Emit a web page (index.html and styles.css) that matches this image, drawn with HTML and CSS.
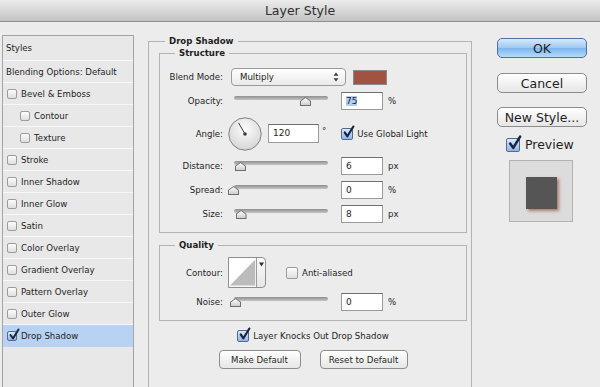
FILE: index.html
```html
<!DOCTYPE html>
<html lang="en">
<head>
    <meta charset="UTF-8">
    <title>Layer Style</title>
    <link rel="stylesheet" href="styles.css">
</head>
<body>
    <div class="titlebar">Layer Style</div>
    <div class="dialog">
        <ul class="styles-list">
            <li class="list-head list-top">Styles</li>
            <li class="list-head">Blending Options: Default</li>
            <li><span class="cb"></span>Bevel &amp; Emboss</li>
            <li class="sub"><span class="cb"></span>Contour</li>
            <li class="sub"><span class="cb"></span>Texture</li>
            <li><span class="cb"></span>Stroke</li>
            <li><span class="cb"></span>Inner Shadow</li>
            <li><span class="cb"></span>Inner Glow</li>
            <li><span class="cb"></span>Satin</li>
            <li><span class="cb"></span>Color Overlay</li>
            <li><span class="cb"></span>Gradient Overlay</li>
            <li><span class="cb"></span>Pattern Overlay</li>
            <li><span class="cb"></span>Outer Glow</li>
            <li class="selected">
                <span class="cb on"><svg viewBox="0 0 12 12"><path d="M2.5 6 L5 9.5 L10.5 0.5"/></svg></span>Drop Shadow
            </li>
        </ul>

        <fieldset class="group group-main">
            <legend>Drop Shadow</legend>

            <fieldset class="group structure">
                <legend>Structure</legend>
                <div class="field">
                    <span class="field-label">Blend Mode:</span>
                    <div class="select">
                        <span>Multiply</span>
                        <svg class="updown" width="6" height="10" viewBox="0 0 6 10"><path d="M3 0.5 L5.5 3.8 H0.5 Z M3 9.5 L5.5 6.2 H0.5 Z"/></svg>
                    </div>
                    <span class="swatch"></span>
                </div>
                <div class="field">
                    <span class="field-label">Opacity:</span>
                    <div class="slider"><span class="track"></span><span class="thumb" style="left: 66px"></span></div>
                    <span class="num"><span class="sel">75</span></span>
                    <span class="unit">%</span>
                </div>
                <div class="field field-angle">
                    <span class="field-label">Angle:</span>
                    <svg class="dial" width="34" height="34" viewBox="0 0 34 34">
                        <defs>
                            <radialGradient id="dialFill" cx="50%" cy="35%" r="65%">
                                <stop offset="0" stop-color="#fbfbfb"/>
                                <stop offset="1" stop-color="#d6d6d6"/>
                            </radialGradient>
                        </defs>
                        <circle cx="17" cy="17" r="16.2" fill="url(#dialFill)" stroke="#808080"/>
                        <line x1="17" y1="17" x2="10.5" y2="5.8" stroke="#3a3a3a" stroke-width="1"/>
                        <circle cx="17" cy="17" r="1.8" fill="#3a3a3a"/>
                    </svg>
                    <span class="num num-wide">120</span>
                    <span class="unit deg">°</span>
                    <span class="cb cb-md on"><svg viewBox="0 0 12 12"><path d="M2.5 6 L5 9.5 L10.5 0.5"/></svg></span>
                    <span class="cb-text">Use Global Light</span>
                </div>
                <div class="field">
                    <span class="field-label">Distance:</span>
                    <div class="slider"><span class="track"></span><span class="thumb" style="left: 1px"></span></div>
                    <span class="num">6</span>
                    <span class="unit">px</span>
                </div>
                <div class="field">
                    <span class="field-label">Spread:</span>
                    <div class="slider"><span class="track"></span><span class="thumb" style="left: -6px"></span></div>
                    <span class="num">0</span>
                    <span class="unit">%</span>
                </div>
                <div class="field">
                    <span class="field-label">Size:</span>
                    <div class="slider"><span class="track"></span><span class="thumb" style="left: 1.5px"></span></div>
                    <span class="num">8</span>
                    <span class="unit">px</span>
                </div>
            </fieldset>

            <fieldset class="group quality">
                <legend>Quality</legend>
                <div class="field field-contour">
                    <span class="field-label">Contour:</span>
                    <div class="contour">
                        <svg width="28" height="29" viewBox="0 0 28 29"><rect width="28" height="29" fill="#fff"/><polygon points="1,28 27,1 27,28" fill="#bcbcbc"/></svg>
                        <span class="contour-arrow"><svg width="5" height="5" viewBox="0 0 5 5"><path d="M0 0.5 H5 L2.5 4.5 Z"/></svg></span>
                    </div>
                    <span class="cb cb-md antialias"></span>
                    <span class="cb-text">Anti-aliased</span>
                </div>
                <div class="field">
                    <span class="field-label">Noise:</span>
                    <div class="slider"><span class="track"></span><span class="thumb" style="left: -4px"></span></div>
                    <span class="num">0</span>
                    <span class="unit">%</span>
                </div>
            </fieldset>

            <div class="knockout">
                <span class="cb cb-md on"><svg viewBox="0 0 12 12"><path d="M2.5 6 L5 9.5 L10.5 0.5"/></svg></span>
                <span class="cb-text">Layer Knocks Out Drop Shadow</span>
            </div>
            <div class="defaults">
                <button class="btn btn-small btn-make">Make Default</button>
                <button class="btn btn-small btn-reset">Reset to Default</button>
            </div>
        </fieldset>

        <div class="actions">
            <button class="btn btn-big btn-ok">OK</button>
            <button class="btn btn-big btn-cancel">Cancel</button>
            <button class="btn btn-big btn-new">New Style...</button>
            <div class="preview-toggle">
                <span class="cb cb-lg on"><svg viewBox="0 0 12 12"><path d="M2.5 6 L5 9.5 L10.5 0.5"/></svg></span>
                <span>Preview</span>
            </div>
            <div class="preview-box"><span class="preview-square"></span></div>
        </div>
    </div>
</body>
</html>
```

FILE: styles.css
```css
* {
    box-sizing: border-box;
}
body {
    margin: 0;
    width: 600px;
    height: 387px;
    overflow: hidden;
    background-color: #ececec;
    font-family: "DejaVu Sans", "Liberation Sans", sans-serif;
    font-size: 8.6px;
    color: #1e1e1e;
}
.titlebar {
    height: 22px;
    border-bottom: 1px solid #8e8e8e;
    background: linear-gradient(#ececec, #c3c3c3);
    text-align: center;
    font-size: 12.5px;
    line-height: 22px;
    color: #303030;
}
.dialog {
    display: flex;
    height: 365px;
    padding: 13px 0 0 2px;
}

/* left list */
.styles-list {
    list-style: none;
    margin: 0;
    padding: 0;
    width: 132px;
    flex: none;
    border: 1px solid #a4a4a4;
    border-bottom: none;
    background-color: #e8e8e8;
}
.styles-list li {
    height: 22px;
    display: flex;
    align-items: center;
    gap: 4px;
    padding-left: 4px;
    border-bottom: 1px solid #f7f7f7;
    white-space: nowrap;
}
.styles-list .list-head {
    padding-left: 3px;
}
.styles-list .list-top {
    height: 25px;
}
.styles-list .sub {
    padding-left: 17px;
}
.styles-list .selected {
    background-color: #b8d2f3;
    border-bottom: none;
}

/* checkboxes */
.cb {
    position: relative;
    flex: none;
    width: 10px;
    height: 10px;
    border: 1px solid #9c9c9c;
    border-radius: 2px;
    background: linear-gradient(#fdfdfd, #dedede);
}
.cb.on {
    border-color: #56698a;
    background: linear-gradient(#dceafb, #8fb6e6);
}
.cb svg {
    position: absolute;
    left: 0;
    top: -3px;
    width: 12px;
    height: 12px;
    overflow: visible;
}
.cb svg path {
    fill: none;
    stroke: #1a2344;
    stroke-width: 2;
    stroke-linecap: round;
    stroke-linejoin: round;
}
.cb-md {
    width: 12px;
    height: 12px;
}
.cb-md svg {
    width: 13px;
    height: 13px;
}
.cb-lg {
    width: 14px;
    height: 14px;
}
.cb-lg svg {
    width: 15px;
    height: 15px;
}
.cb-text {
    margin-left: 4px;
    white-space: nowrap;
}

/* group boxes */
.group {
    margin: 0;
    padding: 0;
    min-width: 0;
    border: 1px solid #b3b3b3;
}
.group legend {
    padding: 0 4px;
    margin-left: 15px;
    font-weight: bold;
    line-height: 12px;
}
.group-main {
    width: 324px;
    flex: none;
    margin-left: 14px;
    padding: 0 4px 0 10px;
    border-bottom: none;
}
.group-main > legend {
    margin-left: 6px;
}
.structure {
    display: flex;
    flex-direction: column;
    gap: 6px;
    padding: 9px 0 9px;
}
.quality {
    display: flex;
    flex-direction: column;
    gap: 5px;
    margin-top: 6px;
    padding: 6px 0 9px;
}

/* rows */
.field {
    display: flex;
    align-items: center;
    height: 18px;
}
.field-angle {
    height: 35px;
}
.field-contour {
    height: 31px;
}
.field-label {
    width: 63px;
    flex: none;
    text-align: right;
}
.select {
    display: flex;
    align-items: center;
    justify-content: space-between;
    width: 115px;
    height: 18px;
    margin-left: 8px;
    padding: 0 6px 0 8px;
    border: 1px solid #9b9b9b;
    border-radius: 4px;
    background: linear-gradient(#ffffff, #e9e9e9);
}
.updown path {
    fill: #3c3c3c;
}
.swatch {
    width: 34px;
    height: 15px;
    margin-left: 7px;
    border: 1px solid #8a8a8a;
    background-color: #a25241;
}
.slider {
    position: relative;
    width: 94px;
    height: 18px;
    margin-left: 11px;
    flex: none;
}
.track {
    position: absolute;
    left: 0;
    right: 0;
    top: 4px;
    height: 4px;
    border-radius: 2px;
    background: linear-gradient(#8f8f8f, #c4c4c4);
}
.thumb {
    position: absolute;
    top: 5px;
    width: 11px;
    height: 9px;
    background: #6e6e6e;
    clip-path: polygon(50% 0, 100% 45%, 100% 100%, 0 100%, 0 45%);
}
.thumb::after {
    content: "";
    position: absolute;
    inset: 1px;
    background: linear-gradient(#fdfdfd, #cfcfcf);
    clip-path: polygon(50% 0, 100% 45%, 100% 100%, 0 100%, 0 45%);
}
.num {
    width: 42px;
    height: 18px;
    margin-left: 13px;
    padding-left: 4px;
    line-height: 16px;
    border: 1px solid #9a9a9a;
    border-top-color: #6f6f6f;
    background-color: #fff;
    font-size: 9px;
}
.num .sel {
    background-color: #b3cdf1;
}
.unit {
    margin-left: 5px;
}
.dial {
    margin-left: 5px;
    flex: none;
}
.num-wide {
    width: 51px;
    height: 19px;
    margin-left: 6px;
}
.deg {
    margin-left: 3px;
    margin-right: 15px;
    align-self: flex-start;
    margin-top: 10px;
}
.contour {
    display: flex;
    height: 31px;
    width: 38px;
    margin-left: 5px;
    border: 1px solid #8f8f8f;
    border-radius: 0 4px 4px 0;
    background: linear-gradient(#fbfbfb, #e6e6e6);
}
.contour svg {
    display: block;
}
.contour-arrow {
    width: 9px;
    border-left: 1px solid #9c9c9c;
    display: flex;
    justify-content: center;
    padding-top: 4px;
}
.contour-arrow path {
    fill: #333;
}
.antialias {
    margin-left: 20px;
}

/* bottom of group */
.knockout {
    display: flex;
    align-items: center;
    justify-content: center;
    height: 12px;
    margin-top: 9px;
}
.defaults {
    display: flex;
    justify-content: center;
    gap: 19px;
    margin-top: 8px;
}
.btn {
    font-family: inherit;
    color: #1e1e1e;
    border: 1px solid #8c8c8c;
    border-radius: 4px;
    background: linear-gradient(#ffffff, #e6e6e6);
    padding: 0;
}
.btn-small {
    height: 19px;
    font-size: 8.6px;
}
.btn-make {
    width: 82px;
}
.btn-reset {
    width: 88px;
}

/* right column */
.actions {
    display: flex;
    flex-direction: column;
    width: 90px;
    flex: none;
    margin-left: 25px;
    padding-top: 3px;
}
.btn-big {
    height: 20px;
    font-size: 12.5px;
    border-radius: 5px;
}
.btn-ok {
    border-color: #50719f;
    background: linear-gradient(#d7e9fc, #9ec8f1 50%, #7db5ec 51%, #b6dafa);
}
.btn-cancel {
    margin-top: 15px;
}
.btn-new {
    margin-top: 14px;
}
.preview-toggle {
    display: flex;
    align-items: center;
    gap: 5px;
    margin-top: 10px;
    padding-left: 9px;
    font-size: 12.5px;
}
.preview-box {
    display: flex;
    align-items: center;
    justify-content: center;
    width: 64px;
    height: 62px;
    margin: 8px 0 0 12px;
    padding-top: 3px;
    border: 1px solid #b2b2b2;
    background-color: #dcdcdc;
}
.preview-square {
    width: 31px;
    height: 32px;
    background-color: #555555;
    box-shadow: 2px 2px 3px rgba(150, 80, 60, 0.7);
}
```
